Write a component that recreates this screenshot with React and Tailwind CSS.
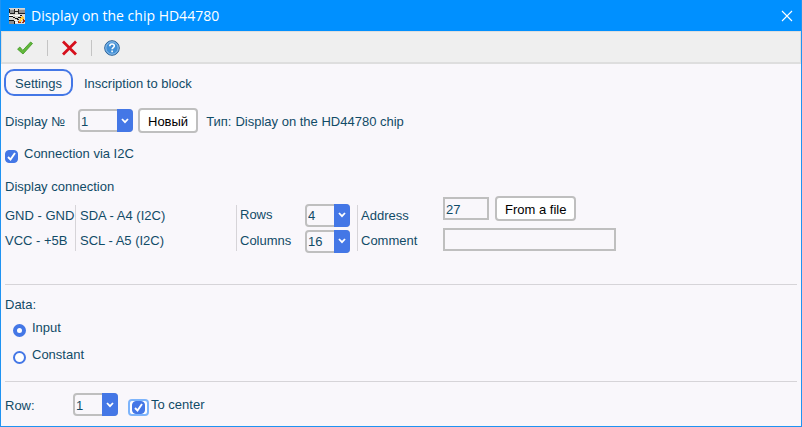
import { useState } from 'react'

function AppIcon() {
  return (
    <svg width="16" height="16" viewBox="0 0 16 16" shapeRendering="crispEdges" aria-hidden="true">
      <rect width="16" height="16" fill="#d9d7d2" />
      <path d="M0 1h1v4H0zM1 5h4v1H1zM5 1h1v5H5zM9 1h1v5H9zM10 5h6v1h-6zM6 3h3v1H6z" fill="#222" />
      <path d="M1 1h4v4H1zM10 1h6v4h-6z" fill="#8f8f8f" />
      <path d="M1 1h4v1H1zM10 1h6v1h-6z" fill="#c4c4c4" />
      <path d="M0 7h4v1H0zM6 7h7v1H6z" fill="#fff" />
      <path d="M0 8h4v1H0zM4 9h2v1H4zM6 10h3v1H6zM9 9h3v1H9zM8 11h2v1H8zM0 12h5v1H0zM5 13h1v3H5zM11 7h2v1h-2z" fill="#111" />
      <path d="M0 13h5v3H0z" fill="#8f8f8f" />
      <path d="M6 12h2v1H6zM6 14h3v1H6z" fill="#fff" />
      <path d="M13 8h1v1h1v2h-1v1h-1v1h-1v1h-2v-2h1v-2h1V9h1z" fill="#ffc72e" />
      <path d="M9 13h1v1h2v1H9zM14 11h1v1h1v2h-1v1h-2v-1h1z" fill="#a12a10" />
      <path d="M12 11h1v1h-1z" fill="#fff4b0" />
    </svg>
  )
}

function CheckMark() {
  return (
    <svg className="pointer-events-none absolute inset-0 m-auto" width="13" height="13" viewBox="0 0 13 13" fill="none" aria-hidden="true">
      <path d="M3 7l2.5 2.5L10 3" stroke="#fff" strokeWidth="1.9" />
    </svg>
  )
}

function Check({ focused, ...props }) {
  return (
    <span className={focused ? 'relative flex border-2 border-[#7db4fb] rounded-sm px-0.5 bg-white' : 'relative flex'}>
      <input type="checkbox" className="appearance-none w-[13px] h-[13px] rounded bg-white border border-[#4477e6] checked:bg-[#4477e6] outline-none" {...props} />
      {props.checked && <CheckMark />}
    </span>
  )
}

function Combo({ options, className, ...props }) {
  return (
    <span className={`relative flex h-[23px] ${className}`}>
      <select className="appearance-none w-full h-full border-2 border-[#bfbfbf] rounded pl-px pt-0.5 pr-4 outline-none" {...props}>
        {options.map(o => <option key={o}>{o}</option>)}
      </select>
      <span className="pointer-events-none absolute right-0 inset-y-0 w-4 bg-[#4477e6] rounded-r flex items-center justify-center">
        <svg width="8" height="6" viewBox="0 0 8 6" fill="none" aria-hidden="true">
          <path d="M1 1l3 3.2L7 1" stroke="#fff" strokeWidth="1.8" />
        </svg>
      </span>
    </span>
  )
}

function Radio({ label, ...props }) {
  return (
    <label className="flex items-center gap-1.5 h-[27px]">
      <input type="radio" name="source" className="appearance-none w-[13px] h-[13px] mt-1.5 rounded-full bg-white border-2 border-[#4477e6] checked:border-4 outline-none" {...props} />
      {label}
    </label>
  )
}

function PushButton({ children }) {
  return <button type="button" className="h-[25px] px-2 pt-0.5 border-2 border-[#bfbfbf] rounded bg-white text-black whitespace-nowrap">{children}</button>
}

export default function App() {
  const [display, setDisplay] = useState('1')
  const [i2c, setI2c] = useState(true)
  const [rows, setRows] = useState('4')
  const [columns, setColumns] = useState('16')
  const [address, setAddress] = useState('27')
  const [comment, setComment] = useState('')
  const [source, setSource] = useState('input')
  const [row, setRow] = useState('1')
  const [center, setCenter] = useState(true)

  return (
    <div className="min-h-screen flex flex-col bg-[#f9f7fb] text-[#114b67] text-[13px] leading-4 font-['Liberation_Sans',Arial,sans-serif] border border-t-0 border-[#1f93f2]">
      <header className="h-[31px] px-2 flex items-center gap-1.5 bg-[#0090ff] text-white">
        <AppIcon />
        <h1 className="text-[14px] font-['Open_Sans',sans-serif]">Display on the chip HD44780</h1>
        <button type="button" aria-label="Close" className="ml-auto">
          <svg width="12" height="12" viewBox="0 0 12 12" aria-hidden="true">
            <path d="M1 1l10 10M11 1L1 11" stroke="#fff" strokeWidth="1.1" />
          </svg>
        </button>
      </header>

      <div className="h-[33px] pl-[15px] pt-0.5 flex items-center bg-[#efefef] border border-b-2 border-[#dedede]">
        <button type="button" aria-label="Apply">
          <svg width="16" height="14" viewBox="0 0 16 14" aria-hidden="true">
            <path d="M.6 8.2L2.8 6l3 3.4L13.6 1l1.9 1.5L6 13z" fill="#62b83a" stroke="#469c2b" strokeWidth=".9" />
          </svg>
        </button>
        <span className="w-px h-4 bg-[#c4c4c4] mx-3.5" />
        <button type="button" aria-label="Cancel">
          <svg width="15" height="16" viewBox="0 0 15 16" aria-hidden="true">
            <path d="M1 1.5l13 13M14 1.5l-13 13" stroke="#d60f1c" strokeWidth="2.8" />
          </svg>
        </button>
        <span className="w-px h-4 bg-[#c4c4c4] ml-3.5 mr-3" />
        <button type="button" aria-label="Help">
          <svg width="16" height="16" viewBox="0 0 16 16" fill="none" aria-hidden="true">
            <circle cx="8" cy="8" r="7.3" fill="#4290d6" stroke="#2d6398" />
            <circle cx="8" cy="8" r="6.2" stroke="#a7cdf0" strokeWidth=".8" />
            <path d="M5.8 6.2C5.8 3.2 10.3 3.3 10.3 6c0 1.5-2.2 1.6-2.2 3.3M8.1 10.6v1.6" stroke="#fff" strokeWidth="1.6" />
          </svg>
        </button>
      </div>

      <main className="flex flex-col px-1">
        <nav className="mt-[5px] -ml-px flex items-center gap-2.5">
          <button type="button" className="h-[27px] px-[9px] pt-0.5 border-2 border-[#4477e6] rounded-[10px]">Settings</button>
          <button type="button" className="h-[27px] pt-0.5 px-px">Inscription to block</button>
        </nav>

        <div className="mt-3 flex items-center">
          <label htmlFor="display" className="w-[73px] pt-0.5">Display №</label>
          <Combo id="display" options={['1', '2']} className="w-[55px]" value={display} onChange={e => setDisplay(e.target.value)} />
          <span className="ml-[5px] mr-2 flex"><PushButton>Новый</PushButton></span>
          <span className="pt-0.5 flex gap-1">
            <span>Тип:</span>
            <span>Display on the HD44780 chip</span>
          </span>
        </div>

        <label className="mt-[13px] flex items-start gap-1.5">
          <span className="mt-1"><Check checked={i2c} onChange={e => setI2c(e.target.checked)} /></span>
          Connection via I2C
        </label>

        <h2 className="mt-4">Display connection</h2>

        <section className="mt-px flex items-end">
          <div className="w-[70px] h-[46px] flex flex-col justify-center gap-[9px] whitespace-nowrap">
            <span>GND - GND</span>
            <span>VCC - +5В</span>
          </div>
          <div className="w-[161px] h-[46px] border-l border-[#d6d4d8] pl-1 flex flex-col justify-center gap-[9px]">
            <span>SDA - A4 (I2C)</span>
            <span>SCL - A5 (I2C)</span>
          </div>
          <div className="w-[121px] h-[46px] border-l border-[#d6d4d8] pl-[3px] flex flex-col justify-center gap-[3px]">
            <div className="flex items-center">
              <label htmlFor="rows" className="w-[65px]">Rows</label>
              <Combo id="rows" options={['2', '4']} className="w-[45px]" value={rows} onChange={e => setRows(e.target.value)} />
            </div>
            <div className="flex items-center">
              <label htmlFor="columns" className="w-[65px]">Columns</label>
              <Combo id="columns" options={['16', '20']} className="w-[45px]" value={columns} onChange={e => setColumns(e.target.value)} />
            </div>
          </div>
          <div className="w-[86px] h-[46px] border-l border-[#d6d4d8] pl-[3px] flex flex-col justify-center gap-[9px]">
            <label htmlFor="address">Address</label>
            <label htmlFor="comment">Comment</label>
          </div>
          <div className="flex flex-col gap-[7px]">
            <div className="flex items-center gap-1.5">
              <input id="address" className="w-[46px] h-[23px] border-2 border-[#bfbfbf] px-px pt-0.5 outline-none" value={address} onChange={e => setAddress(e.target.value)} />
              <PushButton>From a file</PushButton>
            </div>
            <input id="comment" className="w-[173px] h-[23px] border-2 border-[#bfbfbf] px-px outline-none" value={comment} onChange={e => setComment(e.target.value)} />
          </div>
        </section>

        <hr className="mt-[33px] border-[#d6d4d8]" />

        <fieldset className="mt-3">
          <legend>Data:</legend>
          <div className="pl-2 pt-px flex flex-col">
            <Radio label="Input" value="input" checked={source === 'input'} onChange={() => setSource('input')} />
            <Radio label="Constant" value="constant" checked={source === 'constant'} onChange={() => setSource('constant')} />
          </div>
        </fieldset>

        <hr className="mt-[13px] border-[#d6d4d8]" />

        <div className="mt-[11px] flex items-center">
          <label htmlFor="row" className="w-[68px] pt-0.5">Row:</label>
          <Combo id="row" options={['1', '2', '3', '4']} className="w-[45px]" value={row} onChange={e => setRow(e.target.value)} />
          <label className="ml-2.5 pt-1 flex items-start gap-0.5">
            <span className="mt-0.5"><Check focused checked={center} onChange={e => setCenter(e.target.checked)} /></span>
            To center
          </label>
        </div>
      </main>
    </div>
  )
}
